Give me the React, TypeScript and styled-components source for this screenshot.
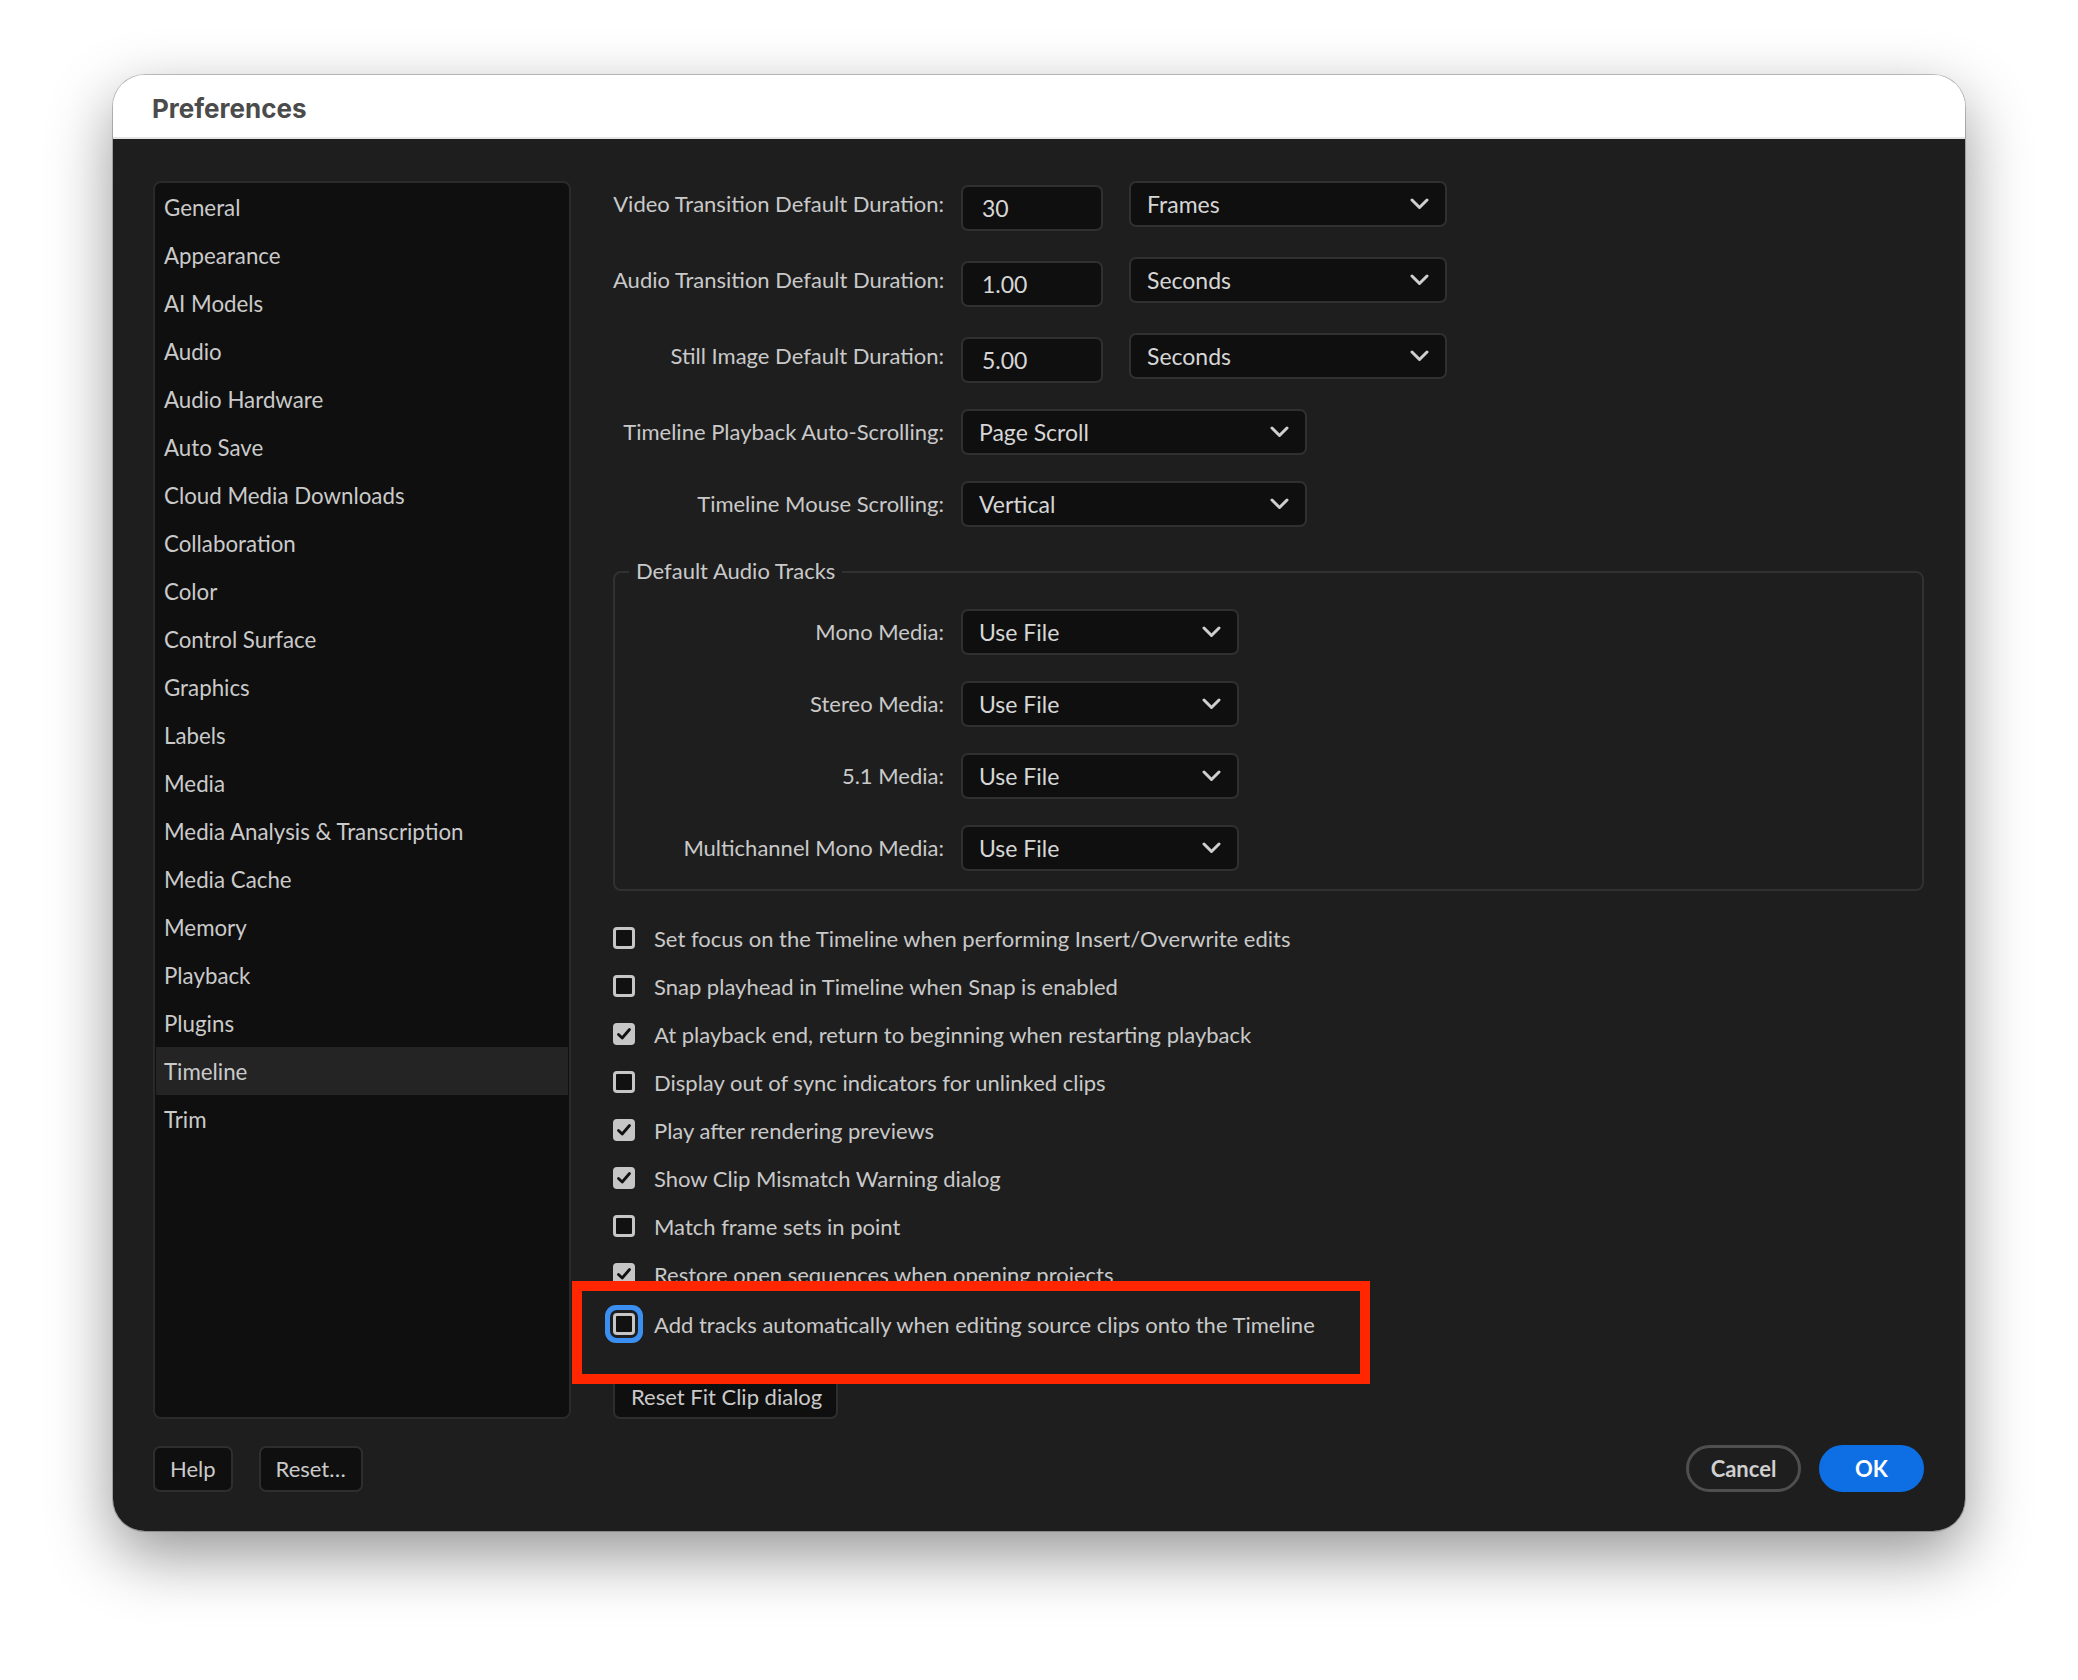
import React from 'react';
import styled, { createGlobalStyle } from 'styled-components';

const GlobalStyle = createGlobalStyle`
  html, body {
    margin: 0;
    padding: 0;
    background: #ffffff;
  }
  body {
    font-family: Lato, "Open Sans", sans-serif;
    -webkit-font-smoothing: antialiased;
  }
  * {
    box-sizing: border-box;
  }
`;

const Page = styled.div`
  width: 2078px;
  height: 1680px;
  padding: 75px 0 0 113px;
`;

const Window = styled.div`
  width: 1852px;
  height: 1456px;
  border-radius: 32px;
  overflow: hidden;
  display: flex;
  flex-direction: column;
  box-shadow: 0 0 0 1px rgba(0, 0, 0, 0.22), 0 24px 64px rgba(0, 0, 0, 0.42);
`;

const TitleBar = styled.div`
  height: 64px;
  flex: none;
  background: #ffffff;
  border-bottom: 2px solid #e4e4e4;
  display: flex;
  align-items: center;
  padding: 4px 0 0 39px;
  font-family: Inter, Roboto, sans-serif;
  font-weight: 700;
  font-size: 26px;
  color: #4b4b4b;
`;

const Body = styled.div`
  flex: 1;
  background: #1e1e1e;
  padding: 42px 41px 40px 40px;
  display: grid;
  grid-template-columns: 418px 1fr;
  grid-template-rows: 1fr auto;
  column-gap: 42px;
  row-gap: 26px;
`;

const Sidebar = styled.div`
  background: #0f0f0f;
  border: 2px solid #2a2a2a;
  border-radius: 8px;
  padding: 0 1px;
`;

const NavItem = styled.div<{ $active?: boolean }>`
  height: 48px;
  display: flex;
  align-items: center;
  padding-left: 8px;
  font-size: 22.3px;
  color: #cacaca;
  background: ${(p) => (p.$active ? '#242424' : 'transparent')};
`;

const Content = styled.div`
  display: flex;
  flex-direction: column;
  font-size: 22px;
  color: #c9c9c9;
`;

const FieldRow = styled.div<{ $gap: number }>`
  display: flex;
  align-items: flex-start;
  height: 46px;
  margin-top: ${(p) => p.$gap}px;
  gap: 17px;
`;

const Label = styled.div<{ $width: number }>`
  width: ${(p) => p.$width}px;
  flex: none;
  text-align: right;
  line-height: 46px;
  white-space: nowrap;
`;

const NumberBox = styled.div`
  width: 142px;
  height: 46px;
  margin-top: 4px;
  margin-right: 9px;
  background: #0f0f0f;
  border: 2px solid #303030;
  border-radius: 7px;
  padding-left: 19px;
  display: flex;
  align-items: center;
  font-size: 23px;
  color: #d6d6d6;
`;

const Select = styled.div<{ $width: number }>`
  width: ${(p) => p.$width}px;
  height: 46px;
  background: #0f0f0f;
  border: 2px solid #303030;
  border-radius: 7px;
  padding: 0 16px 0 16px;
  display: flex;
  align-items: center;
  justify-content: space-between;
  font-size: 23px;
  color: #d6d6d6;
`;

const Group = styled.div`
  position: relative;
  margin-top: 44px;
  border: 2px solid #313131;
  border-radius: 8px;
  padding: 36px 0 18px 0;
  display: flex;
  flex-direction: column;
  gap: 26px;
`;

const Legend = styled.div`
  position: absolute;
  top: -15px;
  left: 14px;
  padding: 0 7px;
  background: #1e1e1e;
  line-height: 26px;
  font-size: 22px;
  color: #c9c9c9;
`;

const GroupRow = styled.div`
  display: flex;
  align-items: center;
  height: 46px;
  gap: 17px;
`;

const CheckList = styled.div`
  margin-top: 23px;
  display: flex;
  flex-direction: column;
`;

const CheckRow = styled.div`
  height: 48px;
  display: flex;
  align-items: center;
  gap: 19px;
  white-space: nowrap;
`;

const Box = styled.div<{ $checked?: boolean; $focused?: boolean }>`
  width: 22px;
  height: 22px;
  flex: none;
  border-radius: 4px;
  border: 3px solid #c6c6c6;
  background: ${(p) => (p.$checked ? '#c6c6c6' : '#111111')};
  display: flex;
  align-items: center;
  justify-content: center;
  box-shadow: ${(p) => (p.$focused ? '0 0 0 3px #1e1e1e, 0 0 0 8px #3a8ff0' : 'none')};
`;

const Callout = styled.div`
  position: relative;
  z-index: 1;
  width: 798px;
  margin: -17px 0 0 -41px;
  border: 10px solid #ff2600;
  background: #1e1e1e;
  padding: 9px 0 26px 31px;
`;

const PlainButton = styled.div`
  height: 46px;
  background: #0f0f0f;
  border: 2px solid #2e2e2e;
  border-radius: 7px;
  padding: 0 15px;
  display: inline-flex;
  align-items: center;
  font-size: 22px;
  color: #cacaca;
  white-space: nowrap;
`;

const ResetFitButton = styled(PlainButton)`
  align-self: flex-start;
  margin-top: -11px;
  padding: 0 14px 0 16px;
`;

const Footer = styled.div`
  grid-column: 1 / -1;
  display: flex;
  justify-content: space-between;
  align-items: center;
`;

const ButtonGroup = styled.div<{ $gap: number }>`
  display: flex;
  gap: ${(p) => p.$gap}px;
`;

const PillButton = styled.div<{ $primary?: boolean }>`
  height: 47px;
  width: ${(p) => (p.$primary ? 105 : 115)}px;
  border-radius: 24px;
  display: flex;
  align-items: center;
  justify-content: center;
  font-size: 22px;
  font-weight: 700;
  color: ${(p) => (p.$primary ? '#ffffff' : '#cfcfcf')};
  background: ${(p) => (p.$primary ? '#0e6fe5' : 'transparent')};
  border: 3px solid ${(p) => (p.$primary ? '#0e6fe5' : '#4f4f4f')};
`;

const Chevron: React.FC = () => (
  <svg width="19" height="12" viewBox="0 0 19 12" fill="none">
    <path d="M2 2L9.5 9.5L17 2" stroke="#cfcfcf" strokeWidth="3" strokeLinecap="round" strokeLinejoin="round" />
  </svg>
);

const Tick: React.FC = () => (
  <svg width="16" height="16" viewBox="0 0 16 16" fill="none">
    <path d="M2.5 8.5L6.2 12L13.5 3.5" stroke="#111" strokeWidth="2.8" strokeLinecap="round" strokeLinejoin="round" />
  </svg>
);

const navItems = [
  'General',
  'Appearance',
  'AI Models',
  'Audio',
  'Audio Hardware',
  'Auto Save',
  'Cloud Media Downloads',
  'Collaboration',
  'Color',
  'Control Surface',
  'Graphics',
  'Labels',
  'Media',
  'Media Analysis & Transcription',
  'Media Cache',
  'Memory',
  'Playback',
  'Plugins',
  'Timeline',
  'Trim',
];

const durations = [
  { label: 'Video Transition Default Duration:', value: '30', unit: 'Frames' },
  { label: 'Audio Transition Default Duration:', value: '1.00', unit: 'Seconds' },
  { label: 'Still Image Default Duration:', value: '5.00', unit: 'Seconds' },
];

const trackRows = ['Mono Media:', 'Stereo Media:', '5.1 Media:', 'Multichannel Mono Media:'];

const checks = [
  { text: 'Set focus on the Timeline when performing Insert/Overwrite edits', on: false },
  { text: 'Snap playhead in Timeline when Snap is enabled', on: false },
  { text: 'At playback end, return to beginning when restarting playback', on: true },
  { text: 'Display out of sync indicators for unlinked clips', on: false },
  { text: 'Play after rendering previews', on: true },
  { text: 'Show Clip Mismatch Warning dialog', on: true },
  { text: 'Match frame sets in point', on: false },
  { text: 'Restore open sequences when opening projects', on: true },
];

const App: React.FC = () => {
  return (
    <>
      <GlobalStyle />
      <Page>
        <Window>
          <TitleBar>Preferences</TitleBar>
          <Body>
            <Sidebar>
              {navItems.map((item) => (
                <NavItem key={item} $active={item === 'Timeline'}>
                  {item}
                </NavItem>
              ))}
            </Sidebar>

            <Content>
              {durations.map((d, i) => (
                <FieldRow key={d.label} $gap={i === 0 ? 0 : 30}>
                  <Label $width={331}>{d.label}</Label>
                  <NumberBox>{d.value}</NumberBox>
                  <Select $width={318}>
                    {d.unit}
                    <Chevron />
                  </Select>
                </FieldRow>
              ))}
              <FieldRow $gap={30}>
                <Label $width={331}>Timeline Playback Auto-Scrolling:</Label>
                <Select $width={346}>
                  Page Scroll
                  <Chevron />
                </Select>
              </FieldRow>
              <FieldRow $gap={26}>
                <Label $width={331}>Timeline Mouse Scrolling:</Label>
                <Select $width={346}>
                  Vertical
                  <Chevron />
                </Select>
              </FieldRow>

              <Group>
                <Legend>Default Audio Tracks</Legend>
                {trackRows.map((label) => (
                  <GroupRow key={label}>
                    <Label $width={329}>{label}</Label>
                    <Select $width={278}>
                      Use File
                      <Chevron />
                    </Select>
                  </GroupRow>
                ))}
              </Group>

              <CheckList>
                {checks.map((c) => (
                  <CheckRow key={c.text}>
                    <Box $checked={c.on}>{c.on && <Tick />}</Box>
                    {c.text}
                  </CheckRow>
                ))}
              </CheckList>

              <Callout>
                <CheckRow>
                  <Box $focused />
                  Add tracks automatically when editing source clips onto the Timeline
                </CheckRow>
              </Callout>

              <ResetFitButton>Reset Fit Clip dialog</ResetFitButton>
            </Content>

            <Footer>
              <ButtonGroup $gap={26}>
                <PlainButton>Help</PlainButton>
                <PlainButton>Reset…</PlainButton>
              </ButtonGroup>
              <ButtonGroup $gap={18}>
                <PillButton>Cancel</PillButton>
                <PillButton $primary>OK</PillButton>
              </ButtonGroup>
            </Footer>
          </Body>
        </Window>
      </Page>
    </>
  );
};

export default App;
